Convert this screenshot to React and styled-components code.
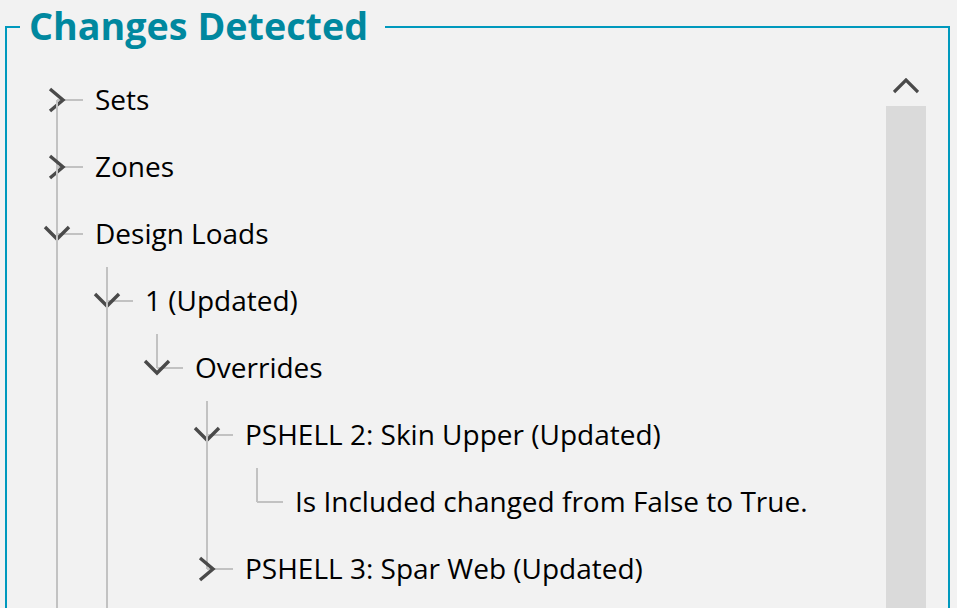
import React from "react";
import styled, { createGlobalStyle, css } from "styled-components";

const Global = createGlobalStyle`
  html, body { margin: 0; padding: 0; background: #f2f2f2; }
  body { font-family: "Open Sans", "Noto Sans", sans-serif; color: #000; }
`;

const BORDER = "#0099bd";
const LINE = "#c2c2c2";
const GLYPH = "#4a4a4a";

const Page = styled.div`
  height: 100vh;
  overflow: hidden;
  padding-left: 5px;
  padding-right: 7px;
  box-sizing: border-box;
`;

const Group = styled.section`
  display: flex;
  flex-direction: column;
  height: 100%;
`;

const TitleRow = styled.header`
  display: flex;
  height: 52px;
  flex-shrink: 0;
`;

const Corner = styled.div`
  align-self: flex-end;
  height: 26px;
  box-sizing: border-box;
  border-top: 2px solid ${BORDER};
  ${(p) => (p.$side === "left" ? css`
    width: 15px;
    border-left: 2px solid ${BORDER};
  ` : css`
    flex: 1;
    border-right: 2px solid ${BORDER};
  `)}
`;

const Title = styled.h1`
  margin: 0;
  padding: 0 17px 0 9px;
  font-family: "Open Sans", "Noto Sans", sans-serif;
  font-weight: 700;
  font-size: 37.7px;
  line-height: 52px;
  color: #00889f;
  white-space: nowrap;
`;

const Body = styled.div`
  flex: 1;
  display: flex;
  border-left: 2px solid ${BORDER};
  border-right: 2px solid ${BORDER};
  min-height: 0;
`;

const Tree = styled.div`
  flex: 1;
  padding: 14px 0 0 25px;
  overflow: hidden;
`;

const Row = styled.div`
  display: flex;
  height: 67px;
`;

const Guide = styled.div`
  position: relative;
  width: 50px;
  flex-shrink: 0;
  ${(p) => p.$on && css`
    &::before {
      content: "";
      position: absolute;
      left: 24px;
      top: 0;
      bottom: 0;
      width: 2px;
      background: ${LINE};
    }
  `}
`;

const NodeCell = styled.div`
  position: relative;
  width: 50px;
  flex-shrink: 0;
  &::before {
    content: "";
    display: ${(p) => (p.$top ? "block" : "none")};
    position: absolute;
    left: 24px;
    top: 0;
    height: 50%;
    width: 2px;
    background: ${LINE};
  }
  &::after {
    content: "";
    display: ${(p) => (p.$bottom ? "block" : "none")};
    position: absolute;
    left: 24px;
    top: 50%;
    bottom: 0;
    width: 2px;
    background: ${LINE};
  }
`;

const Connector = styled.span`
  position: absolute;
  left: 25px;
  right: -1px;
  top: calc(50% - 1px);
  height: 2px;
  background: ${LINE};
`;

const ExpanderIcon = styled.svg`
  position: absolute;
  left: 10px;
  top: calc(50% - 15px);
  width: 30px;
  height: 30px;
  overflow: visible;
`;

const Label = styled.span`
  align-self: center;
  margin-left: 13px;
  padding-bottom: 2px;
  font-size: 28px;
  line-height: 38px;
  white-space: nowrap;
`;

const ScrollColumn = styled.div`
  width: 40px;
  margin-right: 22px;
  display: flex;
  flex-direction: column;
  flex-shrink: 0;
`;

const ArrowButton = styled.div`
  height: 54px;
  display: flex;
  justify-content: center;
  align-items: flex-start;
  padding-top: 26px;
  box-sizing: border-box;
`;

const Thumb = styled.div`
  flex: 1;
  background: #dadada;
`;

function Expander({ dir }) {
  const pts = dir === "down" ? "3,8 15,20 27,8" : "8,4 21,15 8,26";
  return (
    <ExpanderIcon viewBox="0 0 30 30">
      <polyline points={pts} fill="none" stroke={GLYPH} strokeWidth="3.4" />
    </ExpanderIcon>
  );
}

const data = [
  { label: "Sets", children: [{ label: "x" }] },
  { label: "Zones", children: [{ label: "x" }] },
  {
    label: "Design Loads",
    expanded: true,
    children: [
      {
        label: "1 (Updated)",
        expanded: true,
        children: [
          {
            label: "Overrides",
            expanded: true,
            children: [
              {
                label: "PSHELL 2: Skin Upper (Updated)",
                expanded: true,
                children: [{ label: "Is Included changed from False to True." }],
              },
              { label: "PSHELL 3: Spar Web (Updated)", children: [{ label: "x" }] },
            ],
          },
        ],
      },
      { label: "2 (Updated)", children: [{ label: "x" }] },
    ],
  },
  { label: "Materials", children: [{ label: "x" }] },
];

function flatten(nodes, level, guides, out) {
  nodes.forEach((n, i) => {
    const isLast = i === nodes.length - 1;
    out.push({
      label: n.label,
      level,
      guides,
      top: !(level === 0 && i === 0),
      bottom: !isLast,
      expander: n.children ? (n.expanded ? "down" : "right") : null,
    });
    if (n.children && n.expanded) flatten(n.children, level + 1, [...guides, !isLast], out);
  });
  return out;
}

const rows = flatten(data, 0, [], []);

export default function App() {
  return (
    <>
      <Global />
      <Page>
        <Group>
          <TitleRow>
            <Corner $side="left" />
            <Title>Changes Detected</Title>
            <Corner $side="right" />
          </TitleRow>
          <Body>
            <Tree>
              {rows.map((r, i) => (
                <Row key={i}>
                  {r.guides.map((g, j) => (
                    <Guide key={j} $on={g} />
                  ))}
                  <NodeCell $top={r.top} $bottom={r.bottom}>
                    <Connector />
                    {r.expander && <Expander dir={r.expander} />}
                  </NodeCell>
                  <Label>{r.label}</Label>
                </Row>
              ))}
            </Tree>
            <ScrollColumn>
              <ArrowButton>
                <svg width="26" height="16" viewBox="0 0 26 16">
                  <polyline points="1,14 13,2 25,14" fill="none" stroke={GLYPH} strokeWidth="3.2" />
                </svg>
              </ArrowButton>
              <Thumb />
            </ScrollColumn>
          </Body>
        </Group>
      </Page>
    </>
  );
}
